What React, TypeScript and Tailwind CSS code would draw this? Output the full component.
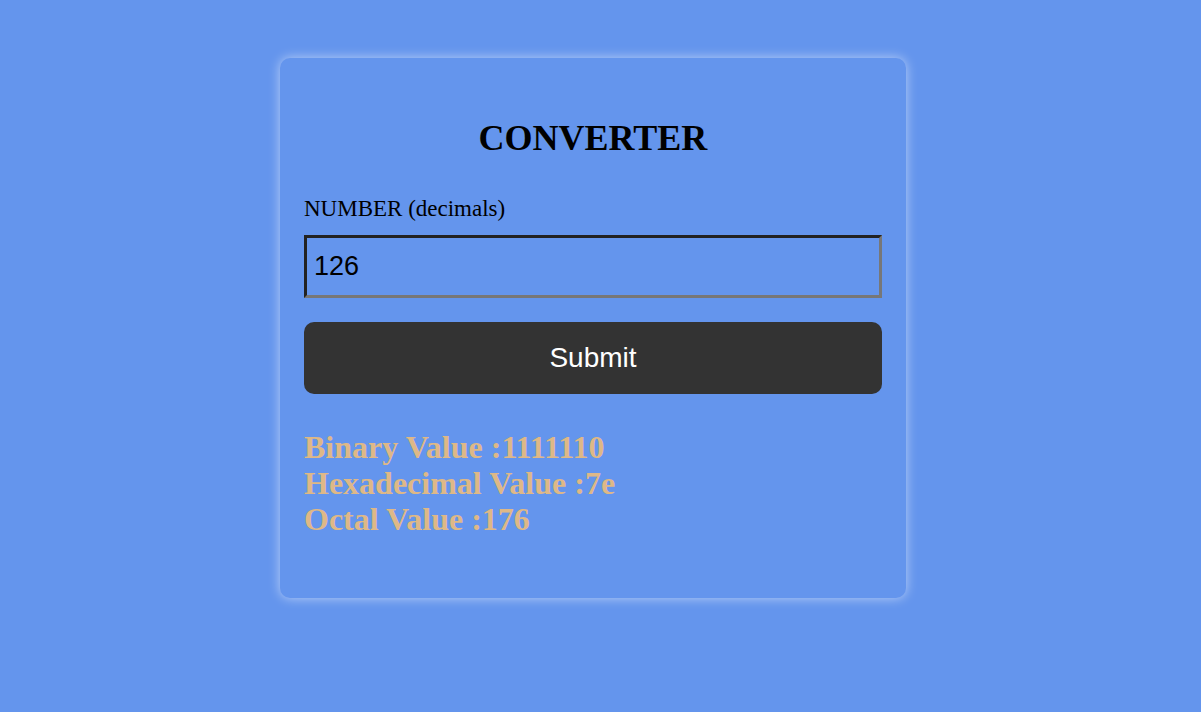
export default function App() {
  return (
    <div className="min-h-screen w-full bg-[#6495ED] pt-[58px]">
      <div className="ml-[280px] w-[626px] h-[540px] rounded-[10px] bg-[#6495ED] shadow-[0_0_12px_rgba(255,255,255,0.55)] px-6 pt-[60px] font-['Liberation_Serif',serif]">
        <h1 className="text-center text-[36px] font-bold leading-[40px] text-black">CONVERTER</h1>
        <label className="mt-[38px] block text-[23px] leading-[26px] text-black">NUMBER (decimals)</label>
        <input
          type="text"
          defaultValue="126"
          className="mt-[13px] block w-full h-[63px] border-[3px] border-t-[#222] border-l-[#222] border-b-[#777] border-r-[#777] bg-transparent pl-[7px] pr-2 font-['Liberation_Sans',sans-serif] text-[27px] text-black outline-none"
        />
        <button className="mt-6 block w-full h-[72px] rounded-[10px] bg-[#333333] font-['Liberation_Sans',sans-serif] text-[28px] text-white">
          Submit
        </button>
        <div className="mt-[35px] text-[32px] font-bold leading-[36px] text-[#DEB887]">
          <div>Binary Value :1111110</div>
          <div>Hexadecimal Value :7e</div>
          <div>Octal Value :176</div>
        </div>
      </div>
    </div>
  );
}
